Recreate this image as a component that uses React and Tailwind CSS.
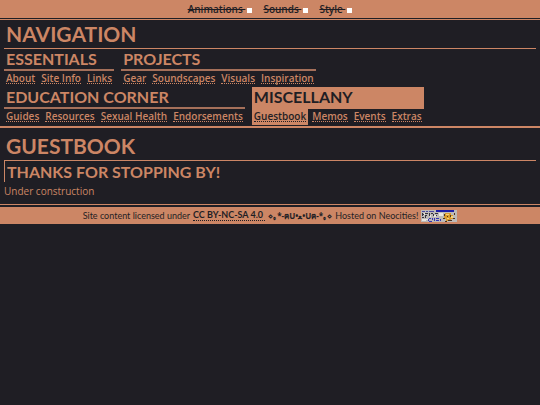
import { useState } from 'react'

const navGroups = [
  { title: 'Essentials', links: ['About', 'Site Info', 'Links'] },
  { title: 'Projects', links: ['Gear', 'Soundscapes', 'Visuals', 'Inspiration'] },
  { title: 'Education Corner', links: ['Guides', 'Resources', 'Sexual Health', 'Endorsements'] },
  { title: 'Miscellany', links: ['Guestbook', 'Memos', 'Events', 'Extras'] },
]

function Toggle({ name }) {
  const [on, setOn] = useState(false)
  return (
    <label className="flex items-center gap-[2px]">
      <span className={on ? 'whitespace-pre' : 'whitespace-pre line-through'}>{name + ' '}</span>
      <input
        type="checkbox"
        checked={on}
        onChange={(e) => setOn(e.target.checked)}
        className="mt-[2px] size-[5px] appearance-none bg-white checked:bg-[#1f1e24]"
      />
    </label>
  )
}

function NavGroup({ title, links, current }) {
  const active = links.includes(current)
  return (
    <section>
      <h2 className={`h-[22px] border-b-2 px-[2px] font-['Lato',sans-serif] text-[16px] leading-[20px] font-bold uppercase ${active ? 'border-[#cc8665] bg-[#cc8665] text-[#1f1e24]' : 'border-[#a5705a]'}`}>
        {title}
      </h2>
      <ul className="flex gap-[2px] text-[10px] leading-[10px] font-semibold">
        {links.map((link) => (
          <li key={link} className={link === current ? 'h-[16px] bg-[#cc8665] px-[2px] pt-[2px] text-[#1f1e24]' : 'h-[16px] px-[2px] pt-[2px]'}>
            <a href="#" className="block border-b border-dotted border-current">{link}</a>
          </li>
        ))}
      </ul>
    </section>
  )
}

function NeocitiesBadge() {
  return (
    <svg viewBox="0 0 36 12" className="h-3 w-9" shapeRendering="crispEdges" aria-label="Neocities">
      <rect width="36" height="12" fill="#bdbab8" />
      <rect x="15" y="0" width="18" height="2" fill="#1c1ca8" />
      <path d="M1 1h3v1h-3zM5 1h2v1h-2zM8 1h5v1h-5z" fill="#4a4aa0" />
      <path d="M1 3h1v3h-1zM2 4h1v1h-1zM4 3h3v1h-3zM4 5h2v1h-2zM8 3h1v3h-1zM10 3h2v1h-2zM12 4h1v2h-1zM1 7h2v1h-2zM4 6h1v2h-1zM14 3h3v1h-3zM15 5h1v1h-1z" fill="#33323c" />
      <path d="M8 8h2v1h-2zM7 9h1v2h-1zM8 11h3v1h-3zM11 8h1v2h-1zM13 8h1v3h-1zM15 8h3v1h-3zM15 10h3v1h-3zM19 9h1v2h-1z" fill="#3434b4" />
      <path d="M3 3h1v2h-1zM9 5h1v2h-1zM13 5h2v2h-2zM18 3h4v3h-4zM5 9h2v1h-2zM1 9h4v2h-4z" fill="#e9e6e0" />
      <path d="M24 3h6v2h2v4h-2v2h-5v-2h-2v-4h1z" fill="#d99a2c" />
      <path d="M25 4h3v1h-3zM30 6h2v2h-2zM26 8h2v1h-2z" fill="#f5d27a" />
      <path d="M23 4h1v2h-1zM26 6h1v1h-1zM29 5h1v2h-1zM22 8h2v1h-2zM27 10h4v1h-4zM32 8h2v1h-2zM33 3h1v2h-1zM24 11h2v1h-2z" fill="#4b3220" />
    </svg>
  )
}

export default function App() {
  return (
    <div className="min-h-screen bg-[#1f1e24] font-['Open_Sans',sans-serif] text-[#cc8665]">
      <header className="flex h-[18px] justify-center gap-[11px] bg-[#cc8665] text-[10px] leading-[18px] font-semibold text-[#1f1e24]">
        <Toggle name="Animations" />
        <Toggle name="Sounds" />
        <Toggle name="Style" />
      </header>

      <nav className="mt-px border-t border-b-2 border-[#cc8665] px-1 pb-px">
        <h1 className="h-[29px] border-b border-[#cc8665] px-[2px] font-['Lato',sans-serif] text-[21px] leading-[28px] font-bold uppercase">
          Navigation
        </h1>
        <div className="flex flex-wrap gap-x-[7px]">
          {navGroups.map((group) => (
            <NavGroup key={group.title} {...group} current="Guestbook" />
          ))}
        </div>
      </nav>

      <main className="px-1 pt-1">
        <h1 className="h-[28px] px-[2px] font-['Lato',sans-serif] text-[21px] leading-[28px] font-bold uppercase">Guestbook</h1>
        <h2 className="h-[22px] border-t border-l border-[#cc8665] px-[2px] font-['Lato',sans-serif] text-[16px] leading-[22px] font-bold uppercase">
          Thanks for stopping by!
        </h2>
        <p className="py-[3px] text-[10px] leading-[13px]">Under construction</p>
      </main>

      <footer className="mt-[3px] border-t border-[#cc8665] pt-[2px]">
        <div className="flex h-[17px] items-center justify-center gap-[3px] bg-[#cc8665] font-['Lato',sans-serif] text-[9px] leading-[10px] text-[#1f1e24]">
          <span>Site content licensed under</span>
          <a href="#" className="border-b border-dotted border-current font-bold whitespace-pre">CC BY-NC-SA 4.0 </a>
          <span className="font-['Open_Sans',sans-serif] text-[8px] font-bold">⋄｡*-ฅU•ﻌ•Uฅ-*｡⋄</span>
          <span>Hosted on Neocities!</span>
          <NeocitiesBadge />
        </div>
      </footer>
    </div>
  )
}
